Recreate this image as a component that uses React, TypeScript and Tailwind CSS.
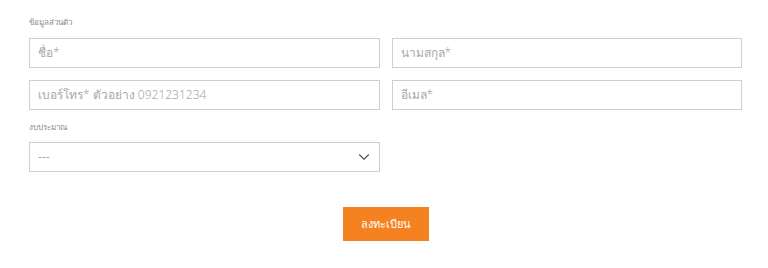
import React from 'react';
import { ChevronDown } from 'lucide-react';

const font = { fontFamily: '"Noto Sans", "Liberation Sans", sans-serif' };

const Field = ({ placeholder }: { placeholder: string }) => (
  <div className="h-[30px] border border-[#cfcfcf] bg-white flex items-center px-[8px] text-[12px] font-light text-[#a8a8a8]">
    {placeholder}
  </div>
);

export default function App() {
  return (
    <div className="w-[768px] h-[268px] bg-white pl-[29px] pt-[15px]" style={font}>
      <div className="w-[713px]">
        <div className="text-[8px] text-[#8a8a8a] h-[14px] leading-[14px]">ข้อมูลส่วนตัว</div>
        <div className="grid grid-cols-2 gap-x-[12px] gap-y-[12px] mt-[9px]">
          <Field placeholder="ชื่อ*" />
          <Field placeholder="นามสกุล*" />
          <Field placeholder="เบอร์โทร* ตัวอย่าง 0921231234" />
          <Field placeholder="อีเมล*" />
        </div>
        <div className="text-[8px] text-[#8a8a8a] h-[14px] leading-[14px] mt-[10px]">งบประมาณ</div>
        <div className="grid grid-cols-2 gap-x-[12px] mt-[8px]">
          <div className="h-[30px] border border-[#cfcfcf] bg-white flex items-center justify-between pl-[8px] pr-[6px] text-[12px] font-light text-[#8a8a8a]">
            <span>---</span>
            <ChevronDown size={18} strokeWidth={1.5} className="text-[#555]" />
          </div>
        </div>
        <div className="flex justify-center mt-[35px]">
          <button className="w-[86px] h-[34px] bg-[#f58220] text-white text-[11px] flex items-center justify-center">
            ลงทะเบียน
          </button>
        </div>
      </div>
    </div>
  );
}
